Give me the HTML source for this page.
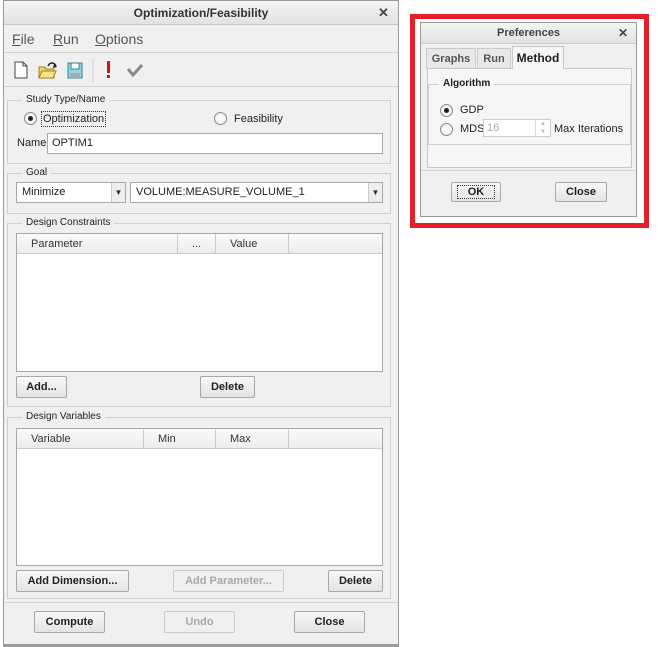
<!DOCTYPE html>
<html><head><style>
*{box-sizing:border-box;margin:0;padding:0}
body{width:658px;height:647px;background:#fff;position:relative;font-family:"Liberation Sans",sans-serif;font-size:11px;color:#222;overflow:hidden}
.a{position:absolute}
.grp{position:absolute;border:1px solid #d0d0d0}
.gl{position:absolute;top:-7px;left:14px;background:#f0f0f0;padding:0 4px;font-size:10px;color:#222}
.btn{position:absolute;border:1px solid #a8a8a8;border-radius:2px;background:linear-gradient(#f8f8f8,#e4e4e4);text-align:center;font-size:11px;font-weight:bold;color:#222;line-height:20px}
.dis{color:#a8a8a8;border-color:#ccc;background:#f0f0f0}
.inp{position:absolute;background:#fff;border:1px solid #a8a8a8}
.th{position:absolute;top:0;height:20px;border-bottom:1px solid #ccc;background:linear-gradient(#fafafa,#ececec);line-height:20px;font-size:11px;color:#333}
.radio{position:absolute;width:13px;height:13px;border-radius:50%;border:1px solid #8a8a8a;background:radial-gradient(#fff,#e8e8e8)}
.radio.on::after{content:"";position:absolute;left:3px;top:3px;width:5px;height:5px;border-radius:50%;background:#222}
</style></head><body>
<!-- main dialog -->
<div class="a" style="left:3px;top:0;width:396px;height:647px;background:#f0f0f0;border:1px solid #9a9a9a;border-bottom:3px solid #9a9a9a"></div>
<div class="a" style="left:4px;top:1px;width:394px;height:24px;background:linear-gradient(#f4f4f4,#e2e2e2);border-bottom:1px solid #c8c8c8;text-align:center;line-height:24px;font-size:12px;font-weight:bold;color:#333">Optimization/Feasibility</div>
<div class="a" style="left:378px;top:5px;font-size:13px;font-weight:bold;color:#444">✕</div>
<div class="a" style="left:4px;top:26px;width:394px;height:27px;border-bottom:1px solid #d4d4d4;font-size:14px;color:#555;line-height:26px">
<span class="a" style="left:8px"><u>F</u>ile</span><span class="a" style="left:49px"><u>R</u>un</span><span class="a" style="left:91px"><u>O</u>ptions</span></div>
<div class="a" style="left:4px;top:53px;width:394px;height:34px;border-bottom:1px solid #d4d4d4"></div>
<svg class="a" style="left:10px;top:58px" width="140" height="24">
<path d="M5 4h8l4 4v12H5z" fill="#fff" stroke="#444"/><path d="M13 4v4h4" fill="none" stroke="#444"/>
<path d="M29 9h6l1 2h8v9H29z" fill="#f0d46a" stroke="#a08020"/><path d="M29 20l3-7h14l-3 7z" fill="#fbe48a" stroke="#a08020"/><path d="M38 8c2-4 6-4 8 0" fill="none" stroke="#222" stroke-width="1.5"/><path d="M44 6l3 3-4 1z" fill="#222"/>
<rect x="58" y="5" width="14" height="15" fill="#8fd8e0" stroke="#3a8090"/><rect x="61" y="5" width="8" height="6" fill="#fff" stroke="#3a8090"/><rect x="60" y="15" width="10" height="5" fill="#aaa"/>
<line x1="83" y1="-5" x2="83" y2="28" stroke="#d4d4d4"/>
<rect x="97" y="3" width="3" height="12" fill="#e01010"/><rect x="97" y="17" width="3" height="3" fill="#e01010"/>
<path d="M118 11l5 6 9-10" fill="none" stroke="#888" stroke-width="3"/>
</svg>
<!-- Study -->
<div class="grp" style="left:7px;top:100px;width:384px;height:64px"><div class="gl">Study Type/Name</div></div>
<div class="radio on" style="left:24px;top:112px"></div>
<div class="a" style="left:41px;top:111px;border:1px dotted #333;padding:1px 1px;font-size:11px">Optimization</div>
<div class="radio" style="left:214px;top:112px"></div>
<div class="a" style="left:234px;top:113px">Feasibility</div>
<div class="a" style="left:17px;top:137px">Name</div>
<div class="inp" style="left:47px;top:133px;width:336px;height:21px;padding:3px 4px">OPTIM1</div>
<!-- Goal -->
<div class="grp" style="left:7px;top:173px;width:384px;height:41px"><div class="gl">Goal</div></div>
<div class="inp" style="left:16px;top:182px;width:110px;height:21px;padding:3px 5px">Minimize</div>
<div class="a" style="left:111px;top:183px;width:14px;height:19px;border-left:1px solid #ccc;background:#eee;font-size:8px;text-align:center;line-height:19px;color:#333">▼</div>
<div class="inp" style="left:130px;top:182px;width:253px;height:21px;padding:3px 5px">VOLUME:MEASURE_VOLUME_1</div>
<div class="a" style="left:368px;top:183px;width:14px;height:19px;border-left:1px solid #ccc;background:#eee;font-size:8px;text-align:center;line-height:19px;color:#333">▼</div>
<!-- Constraints -->
<div class="grp" style="left:7px;top:223px;width:384px;height:184px"><div class="gl">Design Constraints</div></div>
<div class="inp" style="left:16px;top:233px;width:367px;height:139px">
<div class="th" style="left:0;width:161px;padding-left:14px;border-right:1px solid #ccc">Parameter</div>
<div class="th" style="left:161px;width:38px;border-right:1px solid #ccc;text-align:center">...</div>
<div class="th" style="left:199px;width:73px;border-right:1px solid #ccc;padding-left:14px">Value</div>
<div class="th" style="left:272px;width:93px"></div></div>
<div class="btn" style="left:16px;top:376px;width:51px;height:22px">Add...</div>
<div class="btn" style="left:200px;top:376px;width:55px;height:22px">Delete</div>
<!-- Variables -->
<div class="grp" style="left:7px;top:417px;width:384px;height:182px"><div class="gl">Design Variables</div></div>
<div class="inp" style="left:16px;top:428px;width:367px;height:138px">
<div class="th" style="left:0;width:127px;padding-left:14px;border-right:1px solid #ccc">Variable</div>
<div class="th" style="left:127px;width:72px;border-right:1px solid #ccc;padding-left:14px">Min</div>
<div class="th" style="left:199px;width:73px;border-right:1px solid #ccc;padding-left:14px">Max</div>
<div class="th" style="left:272px;width:93px"></div></div>
<div class="btn" style="left:16px;top:570px;width:113px;height:22px">Add Dimension...</div>
<div class="btn dis" style="left:173px;top:570px;width:111px;height:22px">Add Parameter...</div>
<div class="btn" style="left:328px;top:570px;width:55px;height:22px">Delete</div>
<div class="a" style="left:4px;top:602px;width:394px;border-top:1px solid #d4d4d4"></div>
<div class="btn" style="left:34px;top:611px;width:71px;height:22px">Compute</div>
<div class="btn dis" style="left:164px;top:611px;width:71px;height:22px">Undo</div>
<div class="btn" style="left:294px;top:611px;width:71px;height:22px">Close</div>
<!-- Preferences -->
<div class="a" style="left:410px;top:14px;width:239px;height:214px;border:5px solid #e3202a"></div>
<div class="a" style="left:420px;top:22px;width:217px;height:195px;background:#f0f0f0;border:1px solid #9a9a9a"></div>
<div class="a" style="left:421px;top:23px;width:215px;height:21px;background:linear-gradient(#f4f4f4,#e2e2e2);border-bottom:1px solid #ccc;text-align:center;line-height:21px;font-size:11px;font-weight:bold;color:#444">Preferences</div>
<div class="a" style="left:618px;top:26px;font-size:12px;font-weight:bold;color:#444">✕</div>
<div class="a" style="left:426px;top:48px;width:50px;height:21px;border:1px solid #ccc;background:#e8e8e8;text-align:center;line-height:20px;font-weight:bold;color:#555">Graphs</div>
<div class="a" style="left:477px;top:48px;width:34px;height:21px;border:1px solid #ccc;background:#e8e8e8;text-align:center;line-height:20px;font-weight:bold;color:#555">Run</div>
<div class="a" style="left:427px;top:68px;width:205px;height:100px;border:1px solid #c8c8c8;background:#f6f6f6"></div>
<div class="a" style="left:512px;top:46px;width:52px;height:23px;border:1px solid #c8c8c8;border-bottom:none;background:#f6f6f6;text-align:center;line-height:22px;font-weight:bold;font-size:12px;color:#222">Method</div>
<div class="a" style="left:428px;top:84px;width:203px;height:61px;border:1px solid #d0d0d0"><div class="gl" style="background:#f6f6f6;left:10px;font-weight:bold">Algorithm</div></div>
<div class="radio on" style="left:440px;top:104px"></div>
<div class="a" style="left:460px;top:104px">GDP</div>
<div class="radio" style="left:440px;top:123px"></div>
<div class="a" style="left:460px;top:123px">MDS</div>
<div class="inp" style="left:483px;top:119px;width:68px;height:18px;border-color:#ccc;color:#aaa;padding:2px 3px">16</div>
<div class="a" style="left:535px;top:120px;width:15px;height:16px;border-left:1px solid #ddd;font-size:6px;color:#bbb;text-align:center;line-height:8px">▲<br>▼</div>
<div class="a" style="left:554px;top:123px">Max Iterations</div>
<div class="a" style="left:421px;top:170px;width:215px;border-top:1px solid #d4d4d4"></div>
<div class="btn" style="left:451px;top:182px;width:50px;height:20px;line-height:18px"><span style="border:1px dotted #333;padding:0 10px">OK</span></div>
<div class="btn" style="left:555px;top:182px;width:52px;height:20px;line-height:18px">Close</div>
</body></html>
